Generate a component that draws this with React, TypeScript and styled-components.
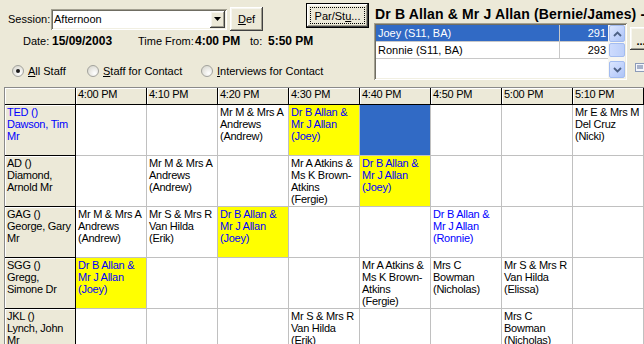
import React from 'react';
import styled, { createGlobalStyle, css } from 'styled-components';

const GlobalStyle = createGlobalStyle`
  html, body { margin: 0; padding: 0; }
  body {
    background: #ECE9D8;
    font-family: "Liberation Sans", Arial, sans-serif;
    font-size: 11px;
    color: #000;
    overflow: hidden;
  }
  #root { width: 644px; height: 344px; overflow: hidden; }
  * { box-sizing: border-box; }
`;

const bevel = css`
  background: #ECE9D8;
  box-shadow: inset -1px -1px 0 #404040, inset 1px 1px 0 #ffffff,
    inset -2px -2px 0 #a09e90, inset 2px 2px 0 #f7f6f0;
`;

const sunken = css`
  box-shadow: inset 1px 1px 0 #a3a091, inset -1px -1px 0 #ffffff,
    inset 2px 2px 0 #6f6d62, inset -2px -2px 0 #f1efe2;
`;

const Window = styled.div`
  width: 644px;
  height: 344px;
  background: #ECE9D8;
  overflow: hidden;
  display: flex;
  flex-direction: column;
`;

const Top = styled.div`
  display: flex;
  align-items: flex-start;
  height: 87px;
  flex: none;
  width: 644px;
  overflow: visible;
`;

const LeftPanel = styled.div`
  width: 298px;
  flex: none;
  display: flex;
  flex-direction: column;
`;

const SessionRow = styled.div`
  display: flex;
  align-items: center;
  height: 24px;
  margin-top: 7px;
  padding-left: 8px;
`;

const SessionLabel = styled.span`
  width: 43px;
  flex: none;
  white-space: nowrap;
`;

const Combo = styled.div`
  width: 176px;
  height: 21px;
  flex: none;
  background: #fff;
  ${sunken};
  display: flex;
  align-items: center;
  padding: 2px;
`;

const ComboText = styled.span`
  flex: 1;
  padding-left: 1px;
  white-space: nowrap;
`;

const ComboButton = styled.div`
  width: 15px;
  height: 17px;
  flex: none;
  ${bevel};
  display: flex;
  align-items: center;
  justify-content: center;
`;

const DefButton = styled.div`
  width: 33px;
  height: 24px;
  flex: none;
  margin-left: 3px;
  ${bevel};
  display: flex;
  align-items: center;
  justify-content: center;
`;

const InfoRow = styled.div`
  display: flex;
  align-items: baseline;
  height: 14px;
  line-height: 14px;
  margin-top: 3px;
  padding-left: 23px;
`;

const InfoText = styled.span<{ $w?: number; $bold?: boolean }>`
  display: inline-block;
  flex: none;
  white-space: nowrap;
  width: ${(p) => (p.$w ? `${p.$w}px` : 'auto')};
  font-weight: ${(p) => (p.$bold ? 700 : 400)};
  font-size: ${(p) => (p.$bold ? '12px' : '11px')};
`;

const RadioRow = styled.div`
  display: flex;
  align-items: center;
  height: 14px;
  margin-top: 16px;
  padding-left: 12px;
`;

const RadioItem = styled.label<{ $w?: number }>`
  display: flex;
  flex: none;
  align-items: center;
  gap: 4px;
  width: ${(p) => (p.$w ? `${p.$w}px` : 'auto')};
  white-space: nowrap;
  line-height: 14px;
`;

const ParButton = styled.div`
  width: 63px;
  height: 25px;
  flex: none;
  margin-left: 8px;
  margin-top: 3px;
  border: 1px solid #000;
  ${bevel};
  padding: 3px;
  display: flex;
`;

const FocusRing = styled.div`
  flex: 1;
  border: 1px dotted #000;
  display: flex;
  align-items: center;
  justify-content: center;
  white-space: nowrap;
`;

const RightPanel = styled.div`
  width: 253px;
  margin-left: 5px;
  flex: none;
  display: flex;
  flex-direction: column;
`;

const Title = styled.div`
  margin-top: 6px;
  height: 16px;
  line-height: 16px;
  padding-left: 1px;
  font-size: 14px;
  font-weight: 700;
  letter-spacing: 0.15px;
  white-space: nowrap;
`;

const ListBox = styled.div`
  margin-top: 1px;
  height: 57px;
  background: #fff;
  ${sunken};
  padding: 2px;
  display: flex;
`;

const ListRows = styled.div`
  flex: 1;
  display: flex;
  flex-direction: column;
`;

const ListRow = styled.div<{ $selected?: boolean }>`
  display: flex;
  height: 17px;
  line-height: 16px;
  border-bottom: 1px solid #c8c8c8;
  background: ${(p) => (p.$selected ? '#316AC5' : '#fff')};
  color: ${(p) => (p.$selected ? '#fff' : '#000')};
`;

const ListName = styled.div`
  width: 184px;
  padding-left: 2px;
  border-right: 1px solid #c8c8c8;
  white-space: nowrap;
`;

const ListNum = styled.div`
  flex: 1;
  text-align: right;
  padding-right: 2px;
`;

const ScrollBar = styled.div`
  width: 17px;
  height: 53px;
  flex: none;
  display: flex;
  flex-direction: column;
  background: #f7f6f1;
`;

const ScrollBtn = styled.div`
  height: 17px;
  flex: none;
  margin: 0 0 0 1px;
  border: 1px solid #a3bcf0;
  border-radius: 2px;
  background: linear-gradient(135deg, #dbe6fe 0%, #c2d3fc 55%, #adc4f6 100%);
  display: flex;
  align-items: center;
  justify-content: center;
`;

const ScrollTrack = styled.div`
  flex: 1;
  display: flex;
  flex-direction: column;
  padding-top: 1px;
`;

const Thumb = styled.div`
  height: 14px;
  margin-left: 1px;
  border: 1px solid #a3bcf0;
  border-radius: 2px;
  background: linear-gradient(90deg, #cddbfd 0%, #bccffa 100%);
`;

const SideColumn = styled.div`
  margin-left: 3px;
  margin-top: 27px;
  display: flex;
  flex-direction: column;
  flex: none;
`;

const DotsButton = styled.div`
  width: 22px;
  height: 23px;
  ${bevel};
  display: flex;
  align-items: center;
  justify-content: center;
  font-weight: 700;
  padding-top: 4px;
`;

const SideIcon = styled.div`
  margin-top: 13px;
  margin-left: 5px;
  display: flex;
`;

const Grid = styled.div`
  margin-left: 4px;
  border-top: 1px solid #8a8a8a;
  border-left: 1px solid #8a8a8a;
  display: grid;
  grid-template-columns: repeat(9, 71px);
  grid-template-rows: 17px;
  grid-auto-rows: 51px;
  flex: none;
`;

const FixedCell = styled.div<{ $blue?: boolean; $header?: boolean }>`
  background: #ECE9D8;
  border-right: 1px solid #000;
  border-bottom: 1px solid #000;
  box-shadow: inset 1px 1px 0 #ffffff;
  padding: ${(p) => (p.$header ? '0 2px' : '1px 2px')};
  line-height: 12px;
  letter-spacing: -0.25px;
  color: ${(p) => (p.$blue ? '#0000FF' : '#000')};
  white-space: nowrap;
  overflow: hidden;
`;

type Tone = 'plain' | 'family' | 'hilite' | 'selected';

const toneBg: Record<Tone, string> = {
  plain: '#ffffff',
  family: '#ffffff',
  hilite: '#FFFF00',
  selected: '#316AC5',
};
const toneFg: Record<Tone, string> = {
  plain: '#000',
  family: '#0000FF',
  hilite: '#0000FF',
  selected: '#fff',
};

const DataCell = styled.div<{ $tone: Tone }>`
  background: ${(p) => toneBg[p.$tone]};
  color: ${(p) => toneFg[p.$tone]};
  border-right: 1px solid #c0c0c0;
  border-bottom: 1px solid #c0c0c0;
  padding: 1px 2px;
  line-height: 12px;
  letter-spacing: -0.25px;
  white-space: nowrap;
  overflow: hidden;
`;

const Line = styled.div`
  height: 12px;
`;

interface CellData {
  lines?: string[];
  tone?: Tone;
}

const E: CellData = {};
const SEL: CellData = { tone: 'selected' };
const joey: CellData = { lines: ['Dr B Allan &', 'Mr J Allan', '(Joey)'], tone: 'hilite' };
const ronnie: CellData = { lines: ['Dr B Allan &', 'Mr J Allan', '(Ronnie)'], tone: 'family' };
const andrews: CellData = { lines: ['Mr M & Mrs A', 'Andrews', '(Andrew)'] };
const atkins: CellData = { lines: ['Mr A Atkins &', 'Ms K Brown-', 'Atkins', '(Fergie)'] };
const erik: CellData = { lines: ['Mr S & Mrs R', 'Van Hilda', '(Erik)'] };
const elissa: CellData = { lines: ['Mr S & Mrs R', 'Van Hilda', '(Elissa)'] };
const bowman: CellData = { lines: ['Mrs C', 'Bowman', '(Nicholas)'] };
const nicki: CellData = { lines: ['Mr E & Mrs M', 'Del Cruz', '(Nicki)'] };

const times = ['4:00 PM', '4:10 PM', '4:20 PM', '4:30 PM', '4:40 PM', '4:50 PM', '5:00 PM', '5:10 PM'];

const rows: { head: string[]; blue?: boolean; cells: CellData[] }[] = [
  { head: ['TED ()', 'Dawson, Tim', 'Mr'], blue: true, cells: [E, E, andrews, joey, SEL, E, E, nicki] },
  { head: ['AD ()', 'Diamond,', 'Arnold Mr'], cells: [E, andrews, E, atkins, joey, E, E, E] },
  { head: ['GAG ()', 'George, Gary', 'Mr'], cells: [andrews, erik, joey, E, E, ronnie, E, E] },
  { head: ['SGG ()', 'Gregg,', 'Simone Dr'], cells: [joey, E, E, E, atkins, bowman, elissa, E] },
  { head: ['JKL ()', 'Lynch, John', 'Mr'], cells: [E, E, E, erik, E, E, bowman, E] },
];

const Radio = ({ checked }: { checked?: boolean }) => (
  <svg width="12" height="12" viewBox="0 0 12 12">
    <defs>
      <radialGradient id={checked ? 'rg1' : 'rg0'} cx="0.65" cy="0.7" r="0.7">
        <stop offset="0" stopColor="#ffffff" />
        <stop offset="1" stopColor="#dcdbd3" />
      </radialGradient>
    </defs>
    <circle cx="6" cy="6" r="5.5" fill={`url(#${checked ? 'rg1' : 'rg0'})`} stroke="#a2a29c" strokeWidth="1" />
    {checked && <circle cx="6" cy="6" r="2" fill="#1c1c1c" />}
  </svg>
);

const Chevron = ({ up }: { up?: boolean }) => (
  <svg width="9" height="6" viewBox="0 0 9 6">
    <path
      d={up ? 'M1 5 L4.5 1.5 L8 5' : 'M1 1 L4.5 4.5 L8 1'}
      fill="none"
      stroke="#4d6185"
      strokeWidth="1.8"
    />
  </svg>
);

export default function App() {
  return (
    <>
      <GlobalStyle />
      <Window>
        <Top>
          <LeftPanel>
            <SessionRow>
              <SessionLabel>Session:</SessionLabel>
              <Combo>
                <ComboText>Afternoon</ComboText>
                <ComboButton>
                  <svg width="7" height="4" viewBox="0 0 7 4">
                    <path d="M0 0 H7 L3.5 4 Z" fill="#000" />
                  </svg>
                </ComboButton>
              </Combo>
              <DefButton>
                <span>
                  <u>D</u>ef
                </span>
              </DefButton>
            </SessionRow>
            <InfoRow>
              <InfoText $w={29}>Date:</InfoText>
              <InfoText $w={86} $bold>
                15/09/2003
              </InfoText>
              <InfoText $w={57}>Time From:</InfoText>
              <InfoText $w={55} $bold>
                4:00 PM
              </InfoText>
              <InfoText $w={18}>to:</InfoText>
              <InfoText $bold>5:50 PM</InfoText>
            </InfoRow>
            <RadioRow>
              <RadioItem $w={75}>
                <Radio checked />
                <span>
                  <u>A</u>ll Staff
                </span>
              </RadioItem>
              <RadioItem $w={114}>
                <Radio />
                <span>
                  <u>S</u>taff for Contact
                </span>
              </RadioItem>
              <RadioItem>
                <Radio />
                <span>
                  <u>I</u>nterviews for Contact
                </span>
              </RadioItem>
            </RadioRow>
          </LeftPanel>
          <ParButton>
            <FocusRing>
              <span>
                Par/St<u>u</u>...
              </span>
            </FocusRing>
          </ParButton>
          <RightPanel>
            <Title>Dr B Allan &amp; Mr J Allan (Bernie/James) -</Title>
            <ListBox>
              <ListRows>
                <ListRow $selected>
                  <ListName>Joey (S11, BA)</ListName>
                  <ListNum>291</ListNum>
                </ListRow>
                <ListRow>
                  <ListName>Ronnie (S11, BA)</ListName>
                  <ListNum>293</ListNum>
                </ListRow>
              </ListRows>
              <ScrollBar>
                <ScrollBtn>
                  <Chevron up />
                </ScrollBtn>
                <ScrollTrack>
                  <Thumb />
                </ScrollTrack>
                <ScrollBtn>
                  <Chevron />
                </ScrollBtn>
              </ScrollBar>
            </ListBox>
          </RightPanel>
          <SideColumn>
            <DotsButton>...</DotsButton>
            <SideIcon>
              <svg width="10" height="9" viewBox="0 0 10 9">
                <rect x="0.5" y="0.5" width="9" height="8" fill="#f4f6fb" stroke="#8c9bb8" />
                <path d="M2 3 H8 M2 5 H8" stroke="#5b6f99" strokeWidth="1" />
              </svg>
            </SideIcon>
          </SideColumn>
        </Top>
        <Grid>
          <FixedCell $header />
          {times.map((t) => (
            <FixedCell $header key={t}>
              {t}
            </FixedCell>
          ))}
          {rows.map((r, ri) => (
            <React.Fragment key={ri}>
              <FixedCell $blue={r.blue}>
                {r.head.map((l, i) => (
                  <Line key={i}>{l}</Line>
                ))}
              </FixedCell>
              {r.cells.map((c, ci) => (
                <DataCell key={ci} $tone={c.tone ?? 'plain'}>
                  {(c.lines ?? []).map((l, i) => (
                    <Line key={i}>{l}</Line>
                  ))}
                </DataCell>
              ))}
            </React.Fragment>
          ))}
        </Grid>
      </Window>
    </>
  );
}
